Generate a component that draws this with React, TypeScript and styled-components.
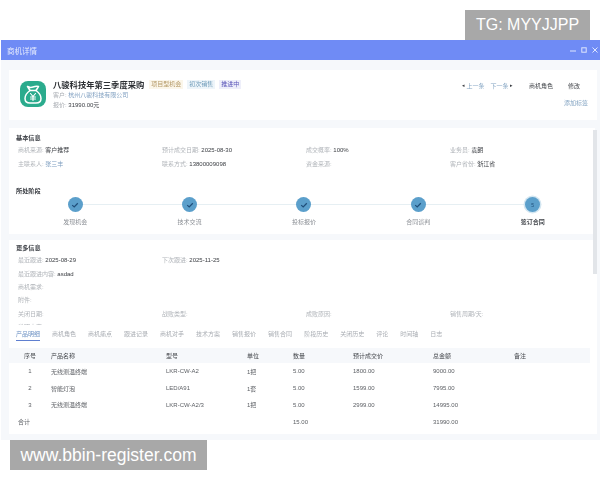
import React from "react";
import styled, { createGlobalStyle } from "styled-components";

const Global = createGlobalStyle`
  html, body { margin: 0; padding: 0; background: #fff; }
  body { font-family: "Liberation Sans", "Noto Sans CJK SC", sans-serif; width: 600px; height: 480px; overflow: hidden; }
`;

const Page = styled.div`
  position: relative;
  width: 600px;
  height: 480px;
  padding-top: 40px;
  box-sizing: border-box;
`;
const Win = styled.div`
  margin-left: 1px;
  width: 599px;
  height: 400px;
  background: #f6f8fb;
  display: flex;
  flex-direction: column;
  overflow: hidden;
  position: relative;
  filter: blur(0.45px);
`;
const TitleBar = styled.div`
  height: 20px;
  flex: none;
  background: #6f8bf5;
  color: #e6ebfd;
  font-size: 7.5px;
  display: flex;
  align-items: center;
  justify-content: space-between;
  padding: 0 2px 0 6px;
`;
const WinButtons = styled.div`
  display: flex;
  gap: 5px;
  align-items: center;
`;
const Body = styled.div`
  flex: 1;
  padding: 10px 3px 6px 8px;
  display: flex;
  flex-direction: column;
`;
const Card = styled.div<{ $h: number; $mb?: number; $r?: number }>`
  background: #fff;
  height: ${(p) => p.$h}px;
  margin-bottom: ${(p) => p.$mb ?? 0}px;
  margin-right: ${(p) => p.$r ?? 0}px;
  box-sizing: border-box;
  flex: none;
`;
const Head = styled(Card)`
  display: flex;
  padding: 11px 8px 0 11px;
  align-items: flex-start;
`;
const Logo = styled.div`
  width: 26px;
  height: 26px;
  border-radius: 8px;
  background: #2bab8d;
  flex: none;
  margin-right: 7px;
  display: flex;
  align-items: center;
  justify-content: center;
`;
const HeadMain = styled.div`
  flex: 1;
  margin-top: -3px;
`;
const TitleRow = styled.div`
  display: flex;
  align-items: center;
  height: 12px;
`;
const DealName = styled.div`
  font-size: 8.3px;
  font-weight: 700;
  color: #2c2f33;
  margin-right: 5px;
  white-space: nowrap;
`;
const Tag = styled.span<{ $bg: string; $c: string }>`
  background: ${(p) => p.$bg};
  color: ${(p) => p.$c};
  font-size: 6px;
  padding: 1px 2px;
  margin-right: 4px;
  line-height: 7px;
  white-space: nowrap;
`;
const SubLine = styled.div`
  font-size: 6px;
  height: 10px;
  line-height: 10px;
  color: #a9adb3;
`;
const Link = styled.span`
  color: #7f9fc0;
`;
const Dark = styled.span`
  color: #3a3d42;
`;
const HeadRight = styled.div`
  display: flex;
  flex-direction: column;
  align-items: flex-end;
  margin-top: -1px;
`;
const Actions = styled.div`
  display: flex;
  align-items: center;
  font-size: 6px;
  color: #45484d;
  height: 10px;
  margin: 0 9px 8px 0;
  white-space: nowrap;
`;
const Pager = styled.div`
  display: flex;
  align-items: center;
  gap: 1.5px;
  color: #86a6c4;
  margin-right: 16px;
`;
const PagerGap = styled.span`
  width: 3px;
`;
const Arrow = styled.span`
  color: #3a3d42;
  font-size: 5px;
`;
const AddTag = styled.div`
  font-size: 6px;
  color: #86a6c4;
  margin-right: 1px;
`;
const ActionGap = styled.span`
  width: 15px;
`;
const Section = styled.div`
  font-size: 6.2px;
  font-weight: 700;
  color: #3d4046;
  padding-left: 7px;
  height: 10px;
  line-height: 10px;
`;
const InfoGrid = styled.div`
  display: grid;
  grid-template-columns: repeat(4, 144px);
  grid-auto-rows: 13.4px;
  padding-left: 9px;
  font-size: 6px;
  color: #b0b4b9;
  align-items: center;
`;
const FullRow = styled.div`
  grid-column: 1 / -1;
`;
const Basic = styled(Card)`
  padding-top: 5px;
`;
const StageCard = styled(Card)`
  padding-top: 9px;
`;
const Steps = styled.div`
  display: flex;
  padding: 1px 0 0 9px;
`;
const Step = styled.div<{ $last?: boolean }>`
  width: 114.4px;
  position: relative;
  display: flex;
  flex-direction: column;
  align-items: center;
  &::after {
    content: "";
    display: ${(p) => (p.$last ? "none" : "block")};
    position: absolute;
    left: 50%;
    width: 100%;
    top: 6.5px;
    height: 1.5px;
    background: #e6eff3;
  }
`;
const Dot = styled.div<{ $cur?: boolean }>`
  width: 15px;
  height: 15px;
  border-radius: 50%;
  background: #5b9fcb;
  color: #1f4e79;
  font-size: 5px;
  display: flex;
  align-items: center;
  justify-content: center;
  position: relative;
  z-index: 1;
  box-shadow: ${(p) => (p.$cur ? "0 0 0 1.5px #d3e6f1" : "none")};
`;
const StepLabel = styled.div<{ $cur?: boolean }>`
  font-size: 6px;
  margin-top: 6px;
  line-height: 8px;
  color: ${(p) => (p.$cur ? "#3d4046" : "#8b8f95")};
  font-weight: ${(p) => (p.$cur ? 700 : 400)};
`;
const More = styled(Card)`
  padding-top: 3px;
  overflow: hidden;
`;
const Tabs = styled.div`
  display: flex;
  background: #fff;
  height: 23px;
  gap: 12px;
  padding: 4px 0 0 7px;
  font-size: 6px;
  color: #a9adb3;
  flex: none;
  box-sizing: border-box;
`;
const Tab = styled.div<{ $on?: boolean }>`
  height: 11px;
  line-height: 11px;
  white-space: nowrap;
  color: ${(p) => (p.$on ? "#6f93c4" : "#a9adb3")};
  border-bottom: ${(p) => (p.$on ? "1.5px solid #5f7fd0" : "none")};
`;
const TableWrap = styled.div`
  background: #fff;
  flex: 1;
`;
const Row = styled.div<{ $head?: boolean; $h: number }>`
  display: grid;
  grid-template-columns: 42px 115px 81px 46px 60px 80px 81px 1fr;
  height: ${(p) => p.$h}px;
  align-items: center;
  font-size: 6px;
  color: ${(p) => (p.$head ? "#45484d" : "#5b5e63")};
  background: ${(p) => (p.$head ? "#f6f8fb" : "#fff")};
  margin-right: ${(p) => (p.$head ? 7 : 0)}px;
`;
const Seq = styled.div`
  text-align: center;
`;
const Total = styled.div`
  padding-left: 9px;
`;
const Scrollbar = styled.div`
  position: absolute;
  left: 592px;
  top: 90px;
  width: 4px;
  height: 144px;
  background: #e2e5e9;
`;
const WatermarkTop = styled.div`
  position: absolute;
  left: 465px;
  top: 10px;
  width: 125px;
  height: 30px;
  background: #a8a8a8;
  color: #fff;
  font-size: 16px;
  line-height: 30px;
  text-align: center;
  white-space: nowrap;
`;
const WatermarkBottom = styled.div`
  position: absolute;
  left: 10px;
  top: 440px;
  width: 197px;
  height: 30px;
  background: #a8a8a8;
  color: #fff;
  font-size: 17.5px;
  line-height: 30px;
  text-align: center;
  white-space: nowrap;
`;

const Check = () => (
  <svg width="8" height="8" viewBox="0 0 10 10" fill="none" stroke="#1f4e79" strokeWidth="1.5">
    <path d="M1.5 5.2 L4 7.5 L8.5 2.8" />
  </svg>
);

const Bag = () => (
  <svg width="20" height="21" viewBox="0 0 20 21" fill="none" stroke="#fff" strokeWidth="1.5" strokeLinejoin="round" strokeLinecap="round">
    <path d="M4.5 2.5 Q7 4 10 3 Q13 2 15.5 2.5 L13 6.5 H7 Z" />
    <path d="M7 6.5 Q2 10 2 14.5 Q2 19 7 19 H13 Q18 19 18 14.5 Q18 10 13 6.5" />
    <path d="M7.5 9.5 L10 12.5 L12.5 9.5 M10 12.5 V16.5 M7.5 13 H12.5 M7.5 15 H12.5" strokeWidth="1.1" />
  </svg>
);

const basic: [string, string, boolean?][] = [
  ["商机来源:", "客户推荐"],
  ["预计成交日期:", "2025-08-30"],
  ["成交概率:", "100%"],
  ["业务员:", "袁朗"],
  ["主联系人:", "张三丰", true],
  ["联系方式:", "13800009098"],
  ["资金来源:", ""],
  ["客户省份:", "浙江省"],
];
const stages = ["发现机会", "技术交流", "投标报价", "合同谈判", "签订合同"];
const tabs = ["产品明细", "商机角色", "商机痛点", "跟进记录", "商机对手", "技术方案", "销售报价", "销售合同", "阶段历史", "关闭历史", "评论", "时间轴", "日志"];
const rows = [
  ["1", "无线测温终端", "LKR-CW-A2", "1把", "5.00", "1800.00", "9000.00"],
  ["2", "智能灯泡", "LED/A91", "1套", "5.00", "1599.00", "7995.00"],
  ["3", "无线测温终端", "LKR-CW-A2/3", "1把", "5.00", "2999.00", "14995.00"],
];

export default function App() {
  return (
    <Page>
      <Global />
      <Win>
        <TitleBar>
          <span>商机详情</span>
          <WinButtons>
            <svg width="6" height="6" viewBox="0 0 6 6" stroke="#dfe6fd" strokeWidth="1"><path d="M0 4 H6" /></svg>
            <svg width="6" height="6" viewBox="0 0 6 6" stroke="#dfe6fd" strokeWidth="1" fill="none"><rect x="0.8" y="0.8" width="4.4" height="4.4" /></svg>
            <svg width="6" height="6" viewBox="0 0 6 6" stroke="#dfe6fd" strokeWidth="1"><path d="M0.5 0.5 L5.5 5.5 M5.5 0.5 L0.5 5.5" /></svg>
          </WinButtons>
        </TitleBar>
        <Body>
          <Head $h={50} $mb={8}>
            <Logo><Bag /></Logo>
            <HeadMain>
              <TitleRow>
                <DealName>八骏科技年第三季度采购</DealName>
                <Tag $bg="#fbf6ea" $c="#b59a68">项目型机会</Tag>
                <Tag $bg="#eef5fa" $c="#6d9ab8">初次销售</Tag>
                <Tag $bg="#eeeffa" $c="#5a55b8">推进中</Tag>
              </TitleRow>
              <SubLine>客户: <Link>杭州八骏科技有限公司</Link></SubLine>
              <SubLine>报价: <Dark>31990.00元</Dark></SubLine>
            </HeadMain>
            <HeadRight>
              <Actions>
                <Pager>
                  <Arrow>◂</Arrow><span>上一条</span><PagerGap /><span>下一条</span><Arrow>▸</Arrow>
                </Pager>
                <span>商机角色</span>
                <ActionGap />
                <span>修改</span>
              </Actions>
              <AddTag>添加标签</AddTag>
            </HeadRight>
          </Head>
          <Basic $h={49} $r={2}>
            <Section>基本信息</Section>
            <InfoGrid>
              {basic.map(([k, v, link]) => (
                <div key={k}>{k} {link ? <Link>{v}</Link> : <Dark>{v}</Dark>}</div>
              ))}
            </InfoGrid>
          </Basic>
          <StageCard $h={57} $mb={6} $r={2}>
            <Section>所处阶段</Section>
            <Steps>
              {stages.map((s, i) => (
                <Step key={s} $last={i === 4}>
                  <Dot $cur={i === 4}>{i === 4 ? "5" : <Check />}</Dot>
                  <StepLabel $cur={i === 4}>{s}</StepLabel>
                </Step>
              ))}
            </Steps>
          </StageCard>
          <More $h={85}>
            <Section>更多信息</Section>
            <InfoGrid>
              <div>最近跟进: <Dark>2025-08-29</Dark></div>
              <div>下次跟进: <Dark>2025-11-25</Dark></div>
              <FullRow>最近跟进内容: <Dark>asdad</Dark></FullRow>
              <FullRow>商机需求:</FullRow>
              <FullRow>附件:</FullRow>
              <div>关闭日期:</div>
              <div>战败类型:</div>
              <div>成败原因:</div>
              <div>销售周期/天:</div>
              <FullRow>说明内容:</FullRow>
            </InfoGrid>
          </More>
          <Tabs>
            {tabs.map((t, i) => (
              <Tab key={t} $on={i === 0}>{t}</Tab>
            ))}
          </Tabs>
          <TableWrap>
            <Row $head $h={15}>
              <Seq>序号</Seq><div>产品名称</div><div>型号</div><div>单位</div><div>数量</div><div>预计成交价</div><div>总金额</div><div>备注</div>
            </Row>
            {rows.map((r) => (
              <Row key={r[0]} $h={16.8}>
                <Seq>{r[0]}</Seq>
                {r.slice(1).map((c, i) => <div key={i}>{c}</div>)}
                <div />
              </Row>
            ))}
            <Row $h={16.8}>
              <Total>合计</Total><div /><div /><div /><div>15.00</div><div /><div>31990.00</div><div />
            </Row>
          </TableWrap>
        </Body>
        <Scrollbar />
      </Win>
      <WatermarkTop>TG: MYYJJPP</WatermarkTop>
      <WatermarkBottom>www.bbin-register.com</WatermarkBottom>
    </Page>
  );
}
